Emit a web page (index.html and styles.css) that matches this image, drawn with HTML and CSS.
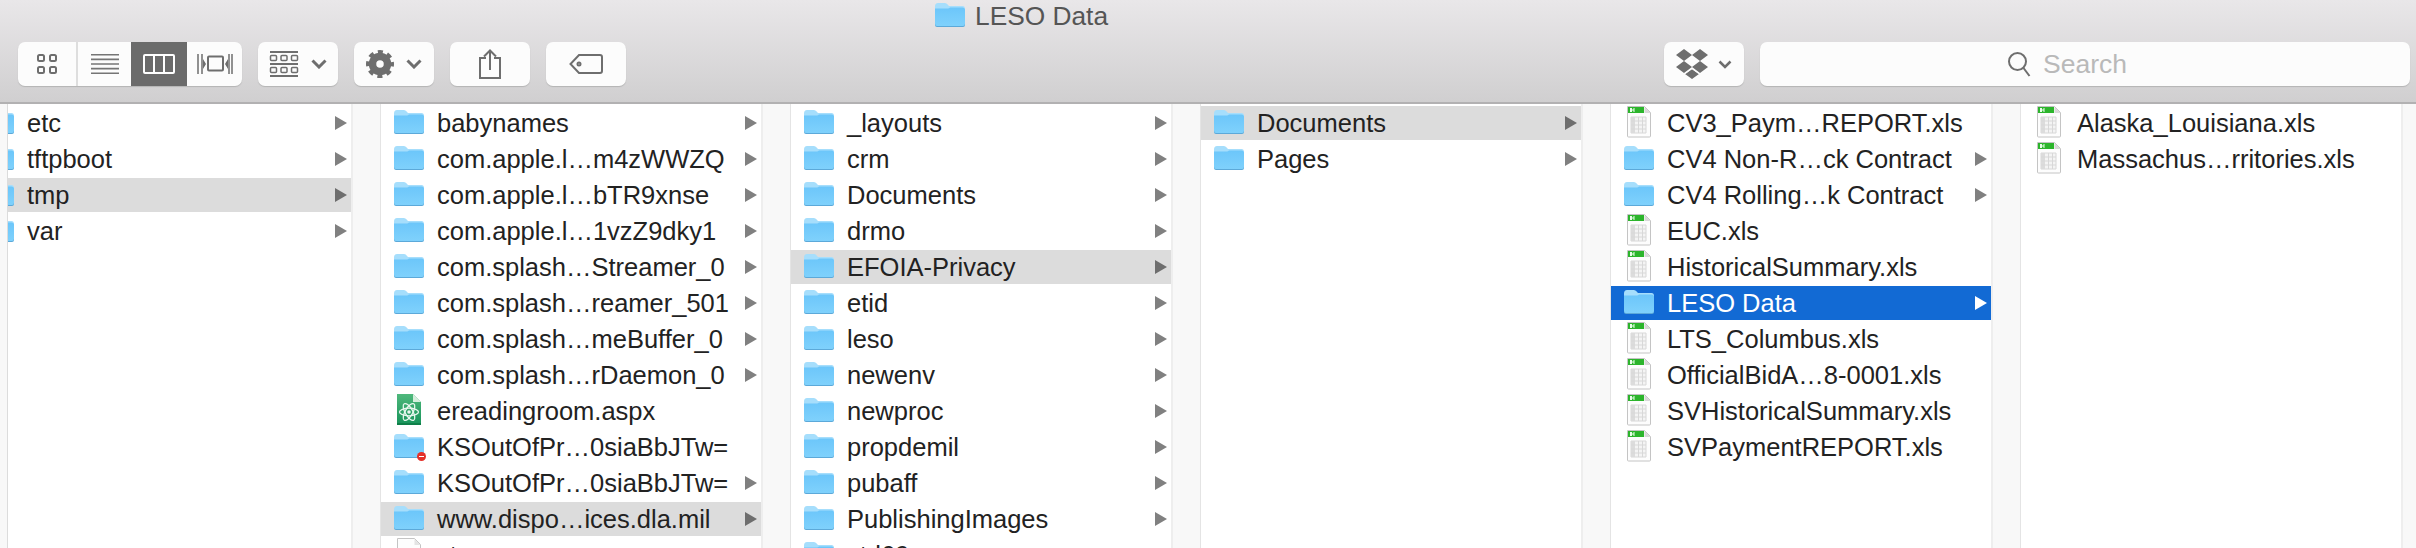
FILE: index.html
```html
<!DOCTYPE html>
<html lang="en">
<head>
<meta charset="utf-8">
<title>LESO Data</title>
<link rel="stylesheet" href="styles.css">
</head>
<body>
<svg class="defs" aria-hidden="true">
  <defs>
    <linearGradient id="fb" x1="0" y1="0" x2="0" y2="1"><stop offset="0" stop-color="#6cc6fa"/><stop offset="1" stop-color="#7fd1fc"/></linearGradient>
    <linearGradient id="ag" x1="0" y1="0" x2="0" y2="1"><stop offset="0" stop-color="#4fb87c"/><stop offset="1" stop-color="#17935a"/></linearGradient>
    <symbol id="folder" viewBox="0 0 30 34">
      <path d="M0 7.500Q0 4 3 4h7q2 0 3.500 2.500l.5.500h13.500q2.500 0 2.500 3v2H0z" fill="#a6defc"/>
      <path d="M0 10h27q3 0 3 2v14q0 2-2 2H2q-2 0-2-2z" fill="#5ca9d9"/>
      <path d="M0 9.500h13q1 0 2-1h12.500q2.500 0 2.500 2.500v13.500q0 2.500-2 2.500H2q-2 0-2-2.500z" fill="url(#fb)"/>
    </symbol>
    <symbol id="xls" viewBox="0 0 30 34">
      <path d="M3.500 .5h17l6 6v23.500q0 1-1 1h-21q-1 0-1-1z" fill="#fdfdfd" stroke="#c4c4c4"/>
      <path d="M4 1h16v6H4z" fill="#2cb52c"/>
      <path d="M6 2h2v1.500h1.500V2h1v4h-1V4.500H8V6H6z" fill="#e8ffe8"/>
      <path d="M20.500 1l6 6h-6z" fill="#d8d8d8"/>
      <path d="M7 11h15v16H7z" fill="#f4f4f4" stroke="#d8d8d8"/>
      <path d="M7 11h4v16H7z" fill="#dcdcdc"/>
      <path d="M7 15h15M7 19h15M7 23h15M14.500 11v16M18.500 11v16" stroke="#d8d8d8" fill="none"/>
    </symbol>
    <symbol id="doc" viewBox="0 0 30 34">
      <path d="M3.500 .5h17l6 6v23.500q0 1-1 1h-21q-1 0-1-1z" fill="#fdfdfd" stroke="#c4c4c4"/>
      <path d="M20.500 1l6 6h-6z" fill="#e4e4e4"/>
    </symbol>
    <symbol id="atom" viewBox="0 0 30 34">
      <path d="M3 0h16l8 8v23H3z" fill="url(#ag)"/>
      <path d="M19 0l8 8h-8z" fill="#d6eedd"/>
      <path d="M3 29h24v2H3z" fill="#0f7f49"/>
      <g fill="none" stroke="#e9f7ef" stroke-width="1.300">
        <ellipse cx="15" cy="18" rx="9.500" ry="3.800"/>
        <ellipse cx="15" cy="18" rx="9.500" ry="3.800" transform="rotate(60 15 18)"/>
        <ellipse cx="15" cy="18" rx="9.500" ry="3.800" transform="rotate(120 15 18)"/>
      </g>
      <circle cx="15" cy="18" r="1.800" fill="#e9f7ef"/>
    </symbol>
  </defs>
</svg>

<header class="toolbar">
  <div class="title">
    <svg class="ico"><use href="#folder"/></svg>
    <span>LESO Data</span>
  </div>
  <div class="tools">
    <div class="btn group">
      <div class="seg seg-icon">
        <svg width="20" height="20" viewBox="0 0 20 20" fill="none" stroke="#6e6e6e" stroke-width="2"><rect x="1" y="1" width="6" height="6" rx="1.500"/><rect x="13" y="1" width="6" height="6" rx="1.500"/><rect x="1" y="13" width="6" height="6" rx="1.500"/><rect x="13" y="13" width="6" height="6" rx="1.500"/></svg>
      </div>
      <div class="seg seg-list">
        <svg width="28" height="20" viewBox="0 0 28 20" fill="#757575"><path d="M0 0h28v1.600H0zM0 4.600h28v1.600H0zM0 9.200h28v1.600H0zM0 13.800h28v1.600H0zM0 18.400h28V20H0z"/></svg>
      </div>
      <div class="seg seg-col">
        <svg width="32" height="20" viewBox="0 0 32 20" fill="none" stroke="#fff" stroke-width="2"><rect x="1" y="1" width="30" height="18" rx="1"/><path d="M11 1v18M21 1v18"/></svg>
      </div>
      <div class="seg seg-cover">
        <svg width="36" height="22" viewBox="0 0 36 22" fill="none" stroke="#6e6e6e" stroke-width="2"><rect x="11" y="3.500" width="15" height="14" rx="1"/><path d="M1 1v20M5 1v20M32 1v20M35 1v20" stroke-width="1.500"/><path d="M6 6l3 5-3 5zM31 6l-3 5 3 5z" fill="#6e6e6e" stroke="none"/></svg>
      </div>
    </div>
    <div class="btn btn-wide">
      <svg width="30" height="26" viewBox="0 0 30 26" fill="none" stroke="#6e6e6e"><path d="M1 1h28M1 13h28M1 25h28" stroke-width="2"/><g stroke-width="1.500"><rect x="1.500" y="4.500" width="6" height="5" rx="1"/><rect x="12" y="4.500" width="6" height="5" rx="1"/><rect x="22.500" y="4.500" width="6" height="5" rx="1"/><rect x="1.500" y="16.500" width="6" height="5" rx="1"/><rect x="12" y="16.500" width="6" height="5" rx="1"/><rect x="22.500" y="16.500" width="6" height="5" rx="1"/></g></svg>
      <svg class="chev" width="16" height="10" viewBox="0 0 16 10"><path d="M1.500 1.500L8 8l6.500-6.500" fill="none" stroke="#6e6e6e" stroke-width="3"/></svg>
    </div>
    <div class="btn btn-wide">
      <svg width="28" height="28" viewBox="0 0 28 28"><circle cx="14" cy="14" r="7.500" fill="none" stroke="#6e6e6e" stroke-width="7.500"/><circle cx="14" cy="14" r="12" fill="none" stroke="#6e6e6e" stroke-width="4" stroke-dasharray="5 4.425" stroke-dashoffset="2.500"/></svg>
      <svg class="chev" width="16" height="10" viewBox="0 0 16 10"><path d="M1.500 1.500L8 8l6.500-6.500" fill="none" stroke="#6e6e6e" stroke-width="3"/></svg>
    </div>
    <div class="btn">
      <svg width="24" height="30" viewBox="0 0 24 30" fill="none" stroke="#6e6e6e" stroke-width="2"><path d="M8 9H2v20h20V9h-6M12 21V1.500M6 7.500l6-6 6 6"/></svg>
    </div>
    <div class="btn">
      <svg width="34" height="20" viewBox="0 0 34 20" fill="none" stroke="#6e6e6e" stroke-width="2"><path d="M10 1h21q2 0 2 2v14q0 2-2 2H10L1.500 10z"/><circle cx="10" cy="10" r="1.500"/></svg>
    </div>
    <div class="btn btn-drop">
      <svg width="32" height="30" viewBox="0 0 32 30" fill="#6e6e6e"><path d="M8 0l8 6-8 6-8-6zM24 0l8 6-8 6-8-6zM8 12l8 6-8 6-8-6zM24 12l8 6-8 6-8-6zM16 20l7 5-7 5-7-5z"/><path d="M9 24.500l7-5 7 5" fill="none" stroke="#fcfcfc" stroke-width="1.200"/></svg>
      <svg class="chev" width="14" height="9" viewBox="0 0 14 9"><path d="M1.500 1.500L7 7l5.500-5.500" fill="none" stroke="#6e6e6e" stroke-width="2.500"/></svg>
    </div>
    <div class="btn search">
      <svg width="24" height="26" viewBox="0 0 24 26" fill="none" stroke="#6e6e6e" stroke-width="2"><circle cx="10.500" cy="10.500" r="8.500"/><path d="M16.500 17l6 8"/></svg>
      <span>Search</span>
    </div>
  </div>
</header>

<main class="browser">
  <div class="strip"></div>
  <div class="clip">
    <div class="col col-first">
      <div class="row"><svg class="ico"><use href="#folder"/></svg><span>etc</span><i class="arrow"></i></div>
      <div class="row"><svg class="ico"><use href="#folder"/></svg><span>tftpboot</span><i class="arrow"></i></div>
      <div class="row sel"><svg class="ico"><use href="#folder"/></svg><span>tmp</span><i class="arrow"></i></div>
      <div class="row"><svg class="ico"><use href="#folder"/></svg><span>var</span><i class="arrow"></i></div>
    </div>
  </div>
  <div class="gutter"></div>

  <div class="col">
    <div class="row"><svg class="ico"><use href="#folder"/></svg><span>babynames</span><i class="arrow"></i></div>
    <div class="row"><svg class="ico"><use href="#folder"/></svg><span>com.apple.l…m4zWWZQ</span><i class="arrow"></i></div>
    <div class="row"><svg class="ico"><use href="#folder"/></svg><span>com.apple.l…bTR9xnse</span><i class="arrow"></i></div>
    <div class="row"><svg class="ico"><use href="#folder"/></svg><span>com.apple.l…1vzZ9dky1</span><i class="arrow"></i></div>
    <div class="row"><svg class="ico"><use href="#folder"/></svg><span>com.splash…Streamer_0</span><i class="arrow"></i></div>
    <div class="row"><svg class="ico"><use href="#folder"/></svg><span>com.splash…reamer_501</span><i class="arrow"></i></div>
    <div class="row"><svg class="ico"><use href="#folder"/></svg><span>com.splash…meBuffer_0</span><i class="arrow"></i></div>
    <div class="row"><svg class="ico"><use href="#folder"/></svg><span>com.splash…rDaemon_0</span><i class="arrow"></i></div>
    <div class="row"><svg class="ico"><use href="#atom"/></svg><span>ereadingroom.aspx</span></div>
    <div class="row"><span class="badged"><svg class="ico"><use href="#folder"/></svg><b class="badge"></b></span><span>KSOutOfPr…0siaBbJTw=</span></div>
    <div class="row"><svg class="ico"><use href="#folder"/></svg><span>KSOutOfPr…0siaBbJTw=</span><i class="arrow"></i></div>
    <div class="row sel"><svg class="ico"><use href="#folder"/></svg><span>www.dispo…ices.dla.mil</span><i class="arrow"></i></div>
    <div class="row"><svg class="ico"><use href="#doc"/></svg><span>ctx</span></div>
  </div>
  <div class="gutter"></div>

  <div class="col">
    <div class="row"><svg class="ico"><use href="#folder"/></svg><span>_layouts</span><i class="arrow"></i></div>
    <div class="row"><svg class="ico"><use href="#folder"/></svg><span>crm</span><i class="arrow"></i></div>
    <div class="row"><svg class="ico"><use href="#folder"/></svg><span>Documents</span><i class="arrow"></i></div>
    <div class="row"><svg class="ico"><use href="#folder"/></svg><span>drmo</span><i class="arrow"></i></div>
    <div class="row sel"><svg class="ico"><use href="#folder"/></svg><span>EFOIA-Privacy</span><i class="arrow"></i></div>
    <div class="row"><svg class="ico"><use href="#folder"/></svg><span>etid</span><i class="arrow"></i></div>
    <div class="row"><svg class="ico"><use href="#folder"/></svg><span>leso</span><i class="arrow"></i></div>
    <div class="row"><svg class="ico"><use href="#folder"/></svg><span>newenv</span><i class="arrow"></i></div>
    <div class="row"><svg class="ico"><use href="#folder"/></svg><span>newproc</span><i class="arrow"></i></div>
    <div class="row"><svg class="ico"><use href="#folder"/></svg><span>propdemil</span><i class="arrow"></i></div>
    <div class="row"><svg class="ico"><use href="#folder"/></svg><span>pubaff</span><i class="arrow"></i></div>
    <div class="row"><svg class="ico"><use href="#folder"/></svg><span>PublishingImages</span><i class="arrow"></i></div>
    <div class="row"><svg class="ico"><use href="#folder"/></svg><span>ctd69</span><i class="arrow"></i></div>
  </div>
  <div class="gutter"></div>

  <div class="col">
    <div class="row sel"><svg class="ico"><use href="#folder"/></svg><span>Documents</span><i class="arrow"></i></div>
    <div class="row"><svg class="ico"><use href="#folder"/></svg><span>Pages</span><i class="arrow"></i></div>
  </div>
  <div class="gutter"></div>

  <div class="col">
    <div class="row"><svg class="ico"><use href="#xls"/></svg><span>CV3_Paym…REPORT.xls</span></div>
    <div class="row"><svg class="ico"><use href="#folder"/></svg><span>CV4 Non-R…ck Contract</span><i class="arrow"></i></div>
    <div class="row"><svg class="ico"><use href="#folder"/></svg><span>CV4 Rolling…k Contract</span><i class="arrow"></i></div>
    <div class="row"><svg class="ico"><use href="#xls"/></svg><span>EUC.xls</span></div>
    <div class="row"><svg class="ico"><use href="#xls"/></svg><span>HistoricalSummary.xls</span></div>
    <div class="row active"><svg class="ico"><use href="#folder"/></svg><span>LESO Data</span><i class="arrow"></i></div>
    <div class="row"><svg class="ico"><use href="#xls"/></svg><span>LTS_Columbus.xls</span></div>
    <div class="row"><svg class="ico"><use href="#xls"/></svg><span>OfficialBidA…8-0001.xls</span></div>
    <div class="row"><svg class="ico"><use href="#xls"/></svg><span>SVHistoricalSummary.xls</span></div>
    <div class="row"><svg class="ico"><use href="#xls"/></svg><span>SVPaymentREPORT.xls</span></div>
  </div>
  <div class="gutter"></div>

  <div class="col">
    <div class="row"><svg class="ico"><use href="#xls"/></svg><span>Alaska_Louisiana.xls</span></div>
    <div class="row"><svg class="ico"><use href="#xls"/></svg><span>Massachus…rritories.xls</span></div>
  </div>
  <div class="gutter gutter-end"></div>
</main>
</body>
</html>
```
FILE: styles.css
```css
* { box-sizing: border-box; }
html, body { margin: 0; padding: 0; }
body {
  width: 2416px;
  height: 548px;
  overflow: hidden;
  background: #fff;
  color: #222;
  font-family: "Liberation Sans", Arial, sans-serif;
  font-size: 25.5px;
}
.defs { position: absolute; width: 0; height: 0; }

.toolbar {
  height: 104px;
  background: linear-gradient(#e9e7e9, #d0cfd0);
  border-bottom: 2px solid #b2b1b2;
}
.title {
  height: 42px;
  padding-left: 935px;
  display: flex;
  align-items: flex-start;
  gap: 10px;
  color: #555;
  font-size: 26.3px;
  line-height: 32px;
}
.title .ico { margin-top: -1px; }
.tools {
  display: flex;
  gap: 16px;
  padding: 0 6px 0 18px;
}
.btn {
  height: 44px;
  width: 80px;
  display: flex;
  align-items: center;
  justify-content: center;
  background: #fcfcfc;
  border-radius: 7px;
  box-shadow: 0 1px 1px #b4b4b4;
}
.group {
  width: 224px;
  overflow: hidden;
  justify-content: flex-start;
}
.seg { height: 44px; display: flex; align-items: center; justify-content: center; }
.seg-icon { width: 60px; border-right: 2px solid #dedede; }
.seg-list { width: 53px; }
.seg-col { width: 56px; background: #6b6b6b; }
.seg-cover { width: 55px; }
.btn-wide { gap: 12px; }
.chev { flex: none; }
.btn-drop { margin-left: auto; gap: 10px; }
.search {
  width: 650px;
  gap: 12px;
  padding-right: 36px;
  color: #b9b9b9;
  font-size: 26.5px;
}

.browser {
  display: flex;
  height: 444px;
  overflow: hidden;
}
.strip {
  flex: none;
  width: 8px;
  background: #f8f8f8;
  border-right: 1px solid #dcdcdc;
}
.clip {
  flex: none;
  width: 343px;
  overflow: hidden;
}
.col {
  flex: none;
  width: 380px;
  padding-top: 2px;
  background: #fff;
}
.col-first { margin-left: -37px; }
.gutter {
  flex: none;
  width: 30px;
  background: #f8f8f8;
  border-left: 2px solid #eeeeee;
  border-right: 1px solid #e4e4e4;
}
.gutter-end { width: 15px; border-right: 0; }

.row {
  height: 34px;
  margin-bottom: 2px;
  padding-left: 13px;
  display: flex;
  align-items: center;
  gap: 13px;
  white-space: nowrap;
}
.row > span:not(.badged) { line-height: 34px; }
.ico { flex: none; width: 30px; height: 34px; display: block; overflow: visible; }
.badged { position: relative; flex: none; display: block; width: 30px; height: 34px; }
.badge {
  position: absolute;
  left: 23px;
  top: 22px;
  width: 9px;
  height: 9px;
  border-radius: 50%;
  background: #e5312a;
}
.badge::after {
  content: "";
  position: absolute;
  left: 2px;
  top: 4px;
  width: 5px;
  height: 1px;
  background: #fff;
}
.arrow {
  margin-left: auto;
  margin-right: 4px;
  width: 0;
  height: 0;
  border-left: 12px solid #808080;
  border-top: 7px solid transparent;
  border-bottom: 7px solid transparent;
}
.sel { background: #dcdcdc; }
.sel .arrow { border-left-color: #6e6e6e; }
.active { background: #126ad4; color: #fff; }
.active .arrow { border-left-color: #fff; }
```
